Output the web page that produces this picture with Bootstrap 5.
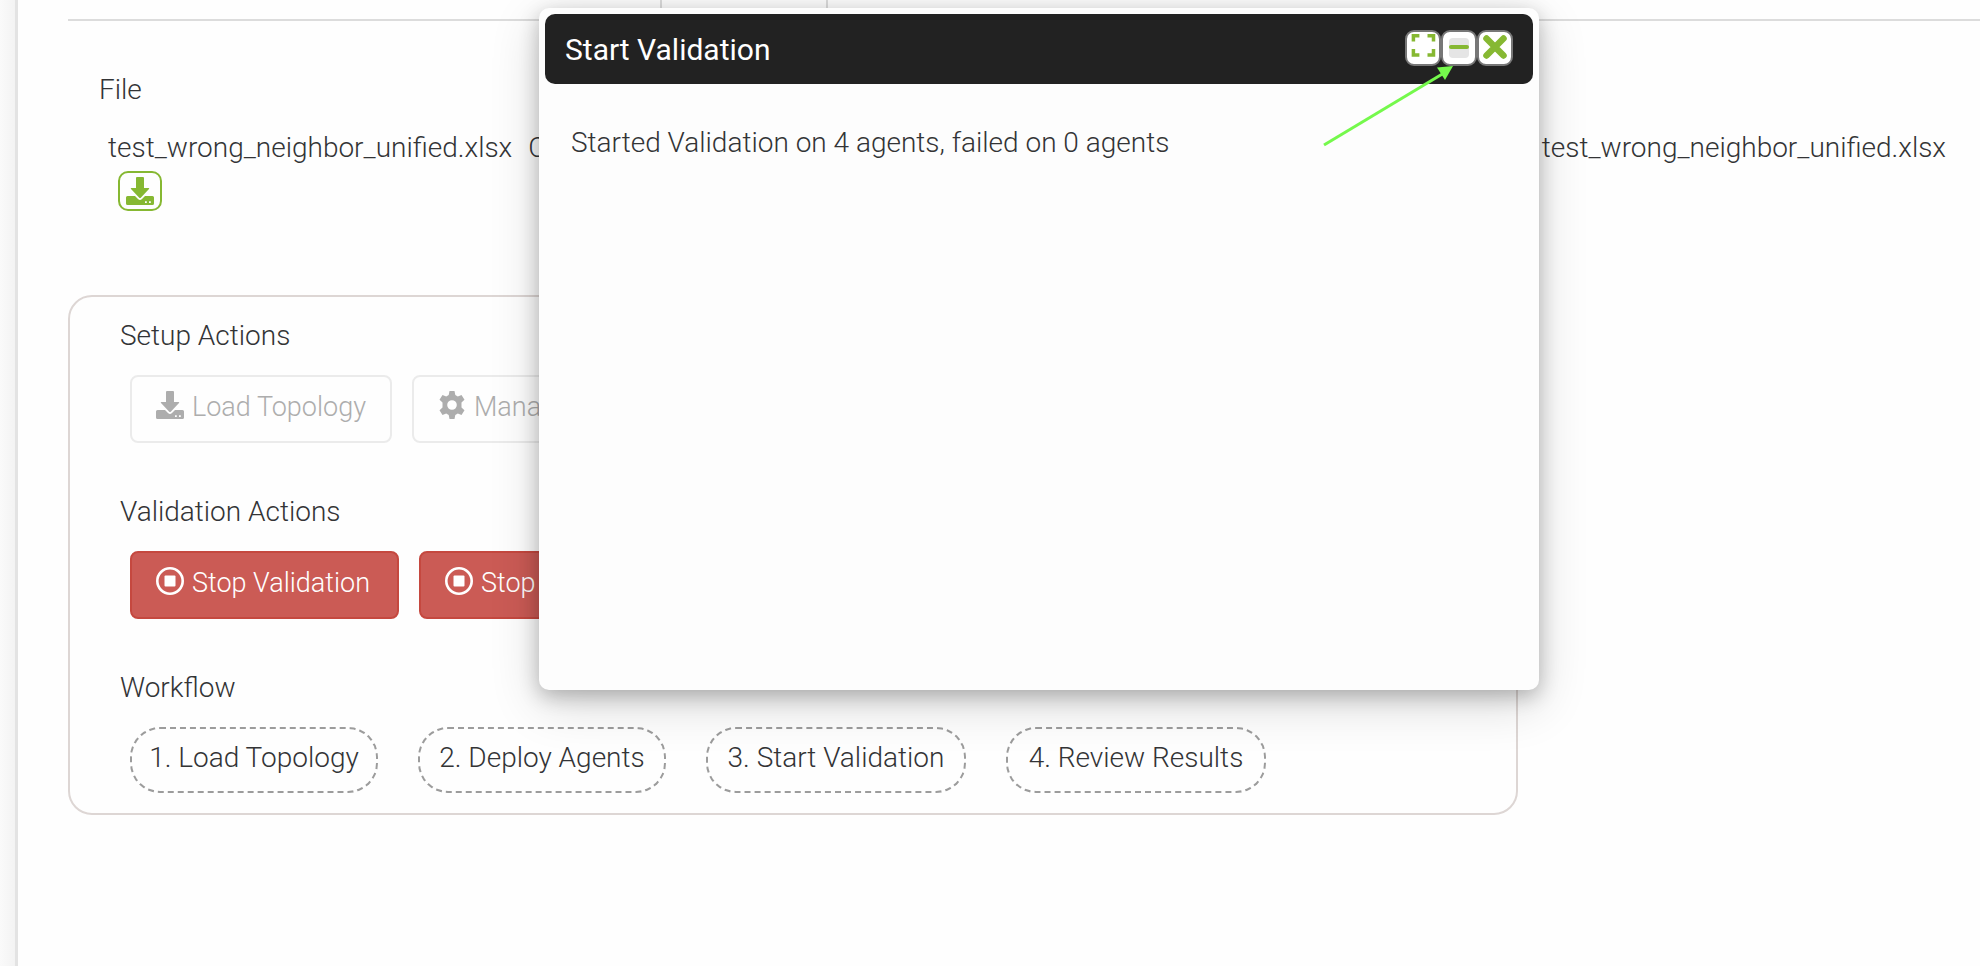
<!DOCTYPE html>
<html lang="en">
<head>
<meta charset="utf-8">
<meta name="viewport" content="width=device-width, initial-scale=1">
<title>Validation</title>
<link href="https://cdn.jsdelivr.net/npm/bootstrap@5.3.0/dist/css/bootstrap.min.css" rel="stylesheet">
<style>
  body { font-family: Roboto, "Liberation Sans", sans-serif; font-weight: 300; font-size: 28px; line-height: 40px; color: #333436; background: #fefefe; overflow-x: hidden; }
  .side-strip { width: 15px; background: linear-gradient(90deg, #fafafa, #f3f3f3); }
  .page-main { border-left: 3px solid #e3e3e3; padding-left: 50px; }
  .tab-strip { height: 21px; border-bottom: 2px solid #dcdcdc; }
  .tab-strip > div { border-right: 2px solid #dcdcdc; }
  .tab-first { width: 594px; }
  .tab-second { width: 166px; }
  .file-area { padding: 49px 34px 0 31px; }
  .file-line { padding: 18px 0 0 9px; }
  .file-name { gap: 16px; }
  .btn-file { margin-left: 10px; margin-top: 3px; width: 44px; height: 40px; border: 2px solid #86b832; border-radius: 10px; color: #86b832; padding: 0; line-height: 1; }
  .btn-file:hover { background: #86b832; color: #fff; }
  .action-panel { margin-top: 84px; max-width: 1450px; border: 2px solid #ddd6d4; border-radius: 24px; padding: 19px 50px 20px; }
  .action-panel h2 { font-size: 28px; line-height: 40px; font-weight: 300; margin: 0; }
  .action-row { padding: 19px 0 49px 10px; gap: 20px; }
  .flow-row { padding: 19px 0 0 10px; gap: 40px; }
  .btn-action { font-size: 27px; line-height: 40px; font-weight: 300; height: 68px; padding: 10px 24px 14px; border-width: 2px; border-radius: 8px; gap: 8px; }
  .btn-action:disabled { color: #adadad; border-color: #ebebeb; opacity: 1; }
  .btn-halt { color: #fff; background: #cb5b55; border-color: #c5483f; }
  .btn-halt:hover { color: #fff; background: #b94a44; }
  .w-load { width: 262px; }
  .w-stop { width: 269px; }
  .flow-step { height: 66px; padding-top: 9px; border: 2px dashed #9c9c9c; border-radius: 30px; text-align: center; }
  .step-a { width: 248px; }
  .step-b { width: 260px; }
  .float-window { top: 8px; left: 539px; width: 1000px; min-height: 682px; background: #fdfdfd; border-radius: 10px; padding: 6px; box-shadow: 0 14px 50px rgba(0,0,0,.16), 0 6px 20px rgba(0,0,0,.24); }
  .window-head { height: 70px; background: #222; color: #fff; border-radius: 10px; padding: 0 20px; }
  .window-head h1 { font-size: 30px; line-height: 40px; font-weight: 400; margin: 0; padding-top: 2px; }
  .window-tools { padding-bottom: 2px; }
  .window-body { padding: 39px 26px; }
  .btn-win { width: 36px; height: 36px; padding: 0; border: 2px solid #777; border-radius: 9px; background: #fff; line-height: 0; }
  .pointer-arrow { left: 783px; top: 56px; pointer-events: none; }
</style>
</head>
<body>
<svg width="0" height="0" class="position-absolute" aria-hidden="true">
  <symbol id="ic-download" viewBox="0 0 28 28">
    <path fill="currentColor" d="M11 0h6q1 0 1 1v10h4.500q1.300 0 .5 1L15 20.500q-1 1-2 0L5 12q-.8-1 .5-1H10V1q0-1 1-1zM1.500 19H9l3 3q2 1.800 4 0l3-3h7.500Q28 19 28 20.500v6q0 1.500-1.500 1.500h-25Q0 28 0 26.500v-6Q0 19 1.500 19zM19 24.200v1.800h1.800v-1.800zm4 0v1.800h1.800v-1.800z"/>
  </symbol>
  <symbol id="ic-gear" viewBox="0 0 28 28">
    <path fill="currentColor" fill-rule="evenodd" d="M11.500 0h5l.8 4 2.500 1.400 3.700-1.400 3 4.800-3 2.700v5l3 2.700-3 4.800-3.700-1.400-2.500 1.400-.8 4h-5l-.8-4-2.500-1.400-3.700 1.400-3-4.800 3-2.700v-5l-3-2.700 3-4.800 3.700 1.400 2.500-1.400zM14 9.200a4.800 4.800 0 1 0 0 9.600 4.800 4.800 0 0 0 0-9.600z"/>
  </symbol>
  <symbol id="ic-stop" viewBox="0 0 28 28">
    <circle cx="14" cy="14" r="12.700" fill="none" stroke="currentColor" stroke-width="2.600"/>
    <rect x="8.500" y="8.500" width="11" height="11" rx="1" fill="currentColor"/>
  </symbol>
</svg>

<div class="d-flex min-vh-100 position-relative">
  <div class="side-strip flex-shrink-0"></div>
  <main class="page-main flex-grow-1">
    <div class="tab-strip d-flex"><div class="tab-first"></div><div class="tab-second"></div></div>

    <section class="file-area">
      <div>File</div>
      <div class="file-line d-flex justify-content-between align-items-start">
        <div>
          <div class="file-name d-flex"><span>test_wrong_neighbor_unified.xlsx</span><span>C</span></div>
          <button type="button" class="btn btn-file d-flex align-items-center justify-content-center" aria-label="Download file"><svg width="28" height="30"><use href="#ic-download"/></svg></button>
        </div>
        <div>test_wrong_neighbor_unified.xlsx</div>
      </div>
    </section>

    <section class="action-panel">
      <h2>Setup Actions</h2>
      <div class="action-row d-flex">
        <button type="button" class="btn btn-action w-load d-flex align-items-center" disabled><svg width="28" height="28" class="mb-1"><use href="#ic-download"/></svg>Load Topology</button>
        <button type="button" class="btn btn-action w-load d-flex align-items-center" disabled><svg width="28" height="28" class="mb-1"><use href="#ic-gear"/></svg>Manage</button>
      </div>
      <h2>Validation Actions</h2>
      <div class="action-row d-flex">
        <button type="button" class="btn btn-action btn-halt w-stop d-flex align-items-center"><svg width="28" height="28" class="mb-1"><use href="#ic-stop"/></svg>Stop Validation</button>
        <button type="button" class="btn btn-action btn-halt w-stop d-flex align-items-center"><svg width="28" height="28" class="mb-1"><use href="#ic-stop"/></svg>Stop</button>
      </div>
      <h2>Workflow</h2>
      <div class="flow-row d-flex">
        <div class="flow-step step-a">1. Load Topology</div>
        <div class="flow-step step-a">2. Deploy Agents</div>
        <div class="flow-step step-b">3. Start Validation</div>
        <div class="flow-step step-b">4. Review Results</div>
      </div>
    </section>
  </main>

  <div class="float-window position-absolute" role="dialog" aria-labelledby="win-title">
    <div class="window-head d-flex align-items-center justify-content-between">
      <h1 id="win-title">Start Validation</h1>
      <div class="window-tools d-flex">
        <button type="button" class="btn-win" aria-label="Maximize"><svg width="32" height="32" fill="none" stroke="#86b832" stroke-width="3.500"><path d="M6.400 9.500V3.800h6M20.500 3.800h6v5.700M26.500 17v6h-6M12.400 23h-6v-6"/></svg></button>
        <button type="button" class="btn-win" aria-label="Minimize"><svg width="32" height="32"><rect x="6" y="6" width="20" height="20" rx="4" fill="#e5e5e5"/><rect x="6" y="13" width="20" height="4" rx="2" fill="#86b832"/></svg></button>
        <button type="button" class="btn-win" aria-label="Close"><svg width="32" height="32" stroke="#86b832" stroke-width="6.500" stroke-linecap="round"><path d="M7.500 6.500l17 17M24.500 6.500l-17 17"/></svg></button>
      </div>
    </div>
    <div class="window-body">Started Validation on 4 agents, failed on 0 agents</div>
    <svg class="pointer-arrow position-absolute" width="134" height="84" aria-hidden="true"><path d="M2 81L122 9" stroke="#75f94c" stroke-width="3"/><path d="M131 2L115 3.500 123 16z" fill="#75f94c"/></svg>
  </div>
</div>
<script src="https://cdn.jsdelivr.net/npm/bootstrap@5.3.0/dist/js/bootstrap.bundle.min.js"></script>
</body>
</html>
